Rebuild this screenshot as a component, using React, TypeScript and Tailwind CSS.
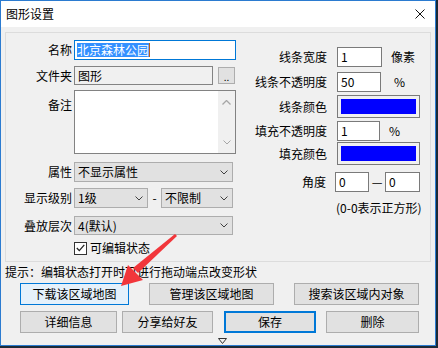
import React from "react"

const Chevron = ({ color = "#404040" }: { color?: string }) => (
  <svg width="8" height="5" viewBox="0 0 8 5">
    <polyline points="0.5,0.5 4,4 7.5,0.5" fill="none" stroke={color} strokeWidth="1" />
  </svg>
)

const Select = ({ value, className }: { value: string; className: string }) => (
  <div
    className={`${className} bg-[#e1e1e1] border border-[#adadad] flex items-center justify-between pl-[3px] pr-[4px]`}
  >
    <span>{value}</span>
    <Chevron />
  </div>
)

const Field = ({ value, className }: { value: string; className: string }) => (
  <div className={`${className} bg-white border border-[#7a7a7a] flex items-center pl-[3px]`}>
    {value}
  </div>
)

const Btn = ({ label, className }: { label: string; className: string }) => (
  <div className={`${className} h-[22px] flex items-center justify-center text-[12px]`}>
    {label}
  </div>
)

export default function App() {
  return (
    <div className="w-[438px] h-[348px] bg-[#1c2a36] relative overflow-hidden font-['Noto_Sans_CJK_SC',sans-serif] text-[12px] leading-[14px] text-black">
      <div className="w-[436px] h-[346px] border border-[#2b7bd0] flex flex-col bg-[#f0f0f0]">
        {/* title bar */}
        <div className="h-[26px] bg-white flex items-center justify-between pl-[5px] pr-[10px]">
          <span className="text-[12px]">图形设置</span>
          <svg width="10" height="10" viewBox="0 0 10 10">
            <path d="M0.5 0.5 L9.5 9.5 M9.5 0.5 L0.5 9.5" stroke="#111" strokeWidth="1" />
          </svg>
        </div>

        <div className="flex-1 px-[4px] pt-[5px] flex flex-col">
          <div className="h-[230px] border border-[#dcdcdc] flex">
            {/* left column */}
            <div className="w-[230px] pt-[7px] flex flex-col">
              <div className="flex items-center">
                <span className="w-[66px] text-right">名称</span>
                <div className="ml-[2px] w-[162px] h-[20px] bg-white border border-[#0078d7] flex items-center pl-[2px]">
                  <span className="bg-[#3390ff] text-white">北京森林公园</span>
                  <span className="w-[1px] h-[14px] bg-[#b0601c]" />
                </div>
              </div>
              <div className="flex items-center mt-[6px]">
                <span className="w-[66px] text-right">文件夹</span>
                <div className="ml-[2px] w-[139px] h-[19px] bg-[#f0f0f0] border border-[#838383] flex items-center pl-[3px]">
                  图形
                </div>
                <div className="ml-[5px] w-[17px] h-[17px] bg-[#e1e1e1] border border-[#adadad] flex items-end justify-center pb-[2px] text-[10px] leading-[8px]">
                  ..
                </div>
              </div>
              <div className="flex mt-[5px]">
                <span className="w-[66px] text-right pt-[8px]">备注</span>
                <div className="ml-[2px] w-[162px] h-[64px] bg-white border border-[#828282] flex justify-end">
                  <div className="w-[17px] h-full bg-[#f0f0f0] flex flex-col items-center justify-between pt-[9px] pb-[8px]">
                    <svg width="9" height="5" viewBox="0 0 9 5">
                      <polyline points="0.5,4.5 4.5,0.5 8.5,4.5" fill="none" stroke="#a6a6a6" strokeWidth="1.3" />
                    </svg>
                    <Chevron color="#a6a6a6" />
                  </div>
                </div>
              </div>
              <div className="flex items-center mt-[8px]">
                <span className="w-[66px] text-right">属性</span>
                <Select value="不显示属性" className="ml-[2px] w-[159px] h-[20px]" />
              </div>
              <div className="flex items-center mt-[6px]">
                <span className="w-[66px] text-right">显示级别</span>
                <Select value="1级" className="ml-[2px] w-[74px] h-[20px]" />
                <span className="w-[13px] text-center">-</span>
                <Select value="不限制" className="w-[72px] h-[20px]" />
              </div>
              <div className="flex items-center mt-[8px]">
                <span className="w-[66px] text-right">叠放层次</span>
                <Select value="4(默认)" className="ml-[2px] w-[159px] h-[19px]" />
              </div>
              <div className="flex items-center mt-[6px] pl-[68px]">
                <div className="w-[13px] h-[13px] bg-white border border-[#333] flex items-center justify-center">
                  <svg width="9" height="8" viewBox="0 0 9 8">
                    <polyline points="0.8,4 3.3,6.6 8.3,0.8" fill="none" stroke="#222" strokeWidth="1.3" />
                  </svg>
                </div>
                <span className="ml-[3px]">可编辑状态</span>
              </div>
            </div>

            {/* right column */}
            <div className="flex-1 pt-[14px] flex flex-col">
              <div className="flex items-center">
                <span className="w-[91px] text-right">线条宽度</span>
                <Field value="1" className="ml-[10px] w-[45px] h-[20px]" />
                <span className="ml-[9px]">像素</span>
              </div>
              <div className="flex items-center mt-[5px]">
                <span className="w-[91px] text-right">线条不透明度</span>
                <Field value="50" className="ml-[10px] w-[44px] h-[20px]" />
                <span className="ml-[13px]">%</span>
              </div>
              <div className="flex items-center mt-[3px]">
                <span className="w-[91px] text-right">线条颜色</span>
                <div className="ml-[10px] w-[83px] h-[23px] border border-[#7a7a7a] p-[3px]">
                  <div className="w-full h-full bg-[#0000ff]" />
                </div>
              </div>
              <div className="flex items-center mt-[3px]">
                <span className="w-[91px] text-right">填充不透明度</span>
                <Field value="1" className="ml-[10px] w-[43px] h-[20px]" />
                <span className="ml-[9px]">%</span>
              </div>
              <div className="flex items-center mt-[1px]">
                <span className="w-[91px] text-right">填充颜色</span>
                <div className="ml-[10px] w-[83px] h-[23px] border border-[#7a7a7a] p-[3px]">
                  <div className="w-full h-full bg-[#0000ff]" />
                </div>
              </div>
              <div className="flex items-center mt-[7px]">
                <span className="w-[90px] text-right">角度</span>
                <Field value="0" className="ml-[9px] w-[34px] h-[20px]" />
                <span className="w-[16px] text-center">—</span>
                <Field value="0" className="w-[35px] h-[20px]" />
              </div>
              <div className="mt-[9px] pl-[100px]">(0-0表示正方形)</div>
            </div>
          </div>

          <div className="mt-[3px] text-[12px]">提示：编辑状态打开时可进行拖动端点改变形状</div>

          <div className="flex mt-[4px] pl-[15px] gap-[20px]">
            <Btn label="下载该区域地图" className="w-[109px] bg-[#e5f1fb] border border-[#0078d7]" />
            <Btn label="管理该区域地图" className="w-[125px] bg-[#e1e1e1] border border-[#adadad]" />
            <Btn label="搜索该区域内对象" className="w-[125px] bg-[#e1e1e1] border border-[#adadad]" />
          </div>
          <div className="flex mt-[6px] pl-[15px]">
            <Btn label="详细信息" className="w-[97px] bg-[#e1e1e1] border border-[#adadad]" />
            <Btn label="分享给好友" className="ml-[5px] w-[91px] bg-[#e1e1e1] border border-[#adadad]" />
            <Btn label="保存" className="ml-[11px] w-[92px] bg-[#e1e1e1] border-2 border-[#0078d7]" />
            <Btn label="删除" className="ml-[10px] w-[93px] bg-[#e1e1e1] border border-[#adadad]" />
          </div>
          <div className="mt-[5px] pl-[213px]">
            <svg width="9" height="6" viewBox="0 0 9 6">
              <polygon points="0.5,0.5 8.5,0.5 4.5,5.5" fill="none" stroke="#333" strokeWidth="1" />
            </svg>
          </div>
        </div>
      </div>

      {/* red annotation arrow */}
      <svg className="absolute left-0 top-0 pointer-events-none" width="438" height="348" viewBox="0 0 438 348">
        <polygon points="177,236 175,234 133,268 138,273" fill="#f2363b" />
        <polygon points="121,286 128,265 143,280" fill="#f2363b" />
      </svg>
    </div>
  )
}
